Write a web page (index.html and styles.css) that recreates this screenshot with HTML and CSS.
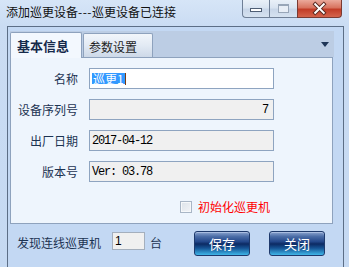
FILE: index.html
```html
<!DOCTYPE html>
<html>
<head>
<meta charset="utf-8">
<link rel="stylesheet" href="styles.css">
</head>
<body>
<div class="window">
  <div class="titlebar">
    <div class="title">添加巡更设备<span class="dash">---</span>巡更设备已连接</div>
    <div class="caption-btns">
      <div class="cbtn min"><span class="min-icon"></span></div>
      <div class="cbtn max"><span class="max-icon"></span></div>
      <div class="cbtn close">
        <svg width="45" height="18" viewBox="0 0 45 18">
          <path d="M18 4 L27 13 M27 4 L18 13" stroke="#5a2a22" stroke-width="4" stroke-linecap="square" fill="none"/>
          <path d="M18 4 L27 13 M27 4 L18 13" stroke="#ffffff" stroke-width="2" stroke-linecap="square" fill="none"/>
        </svg>
      </div>
    </div>
  </div>
  <div class="client">
    <div class="tabs">
      <div class="tabstrip">
        <div class="tab active">基本信息</div>
        <div class="tab inactive">参数设置</div>
        <div class="strip-fill"></div>
        <div class="arrow"></div>
      </div>
      <div class="panel">
        <div class="form">
          <div class="label">名称</div>
          <div class="field edit"><span class="sel">巡更1</span><span class="caret"></span></div>
          <div class="label">设备序列号</div>
          <div class="field ro right"><span class="mono">7</span></div>
          <div class="label">出厂日期</div>
          <div class="field ro"><span class="mono">2017-04-12</span></div>
          <div class="label">版本号</div>
          <div class="field ro"><span class="mono">Ver: 03.78</span></div>
        </div>
        <div class="check-row">
          <span class="checkbox"></span>
          <span class="check-label">初始化巡更机</span>
        </div>
      </div>
    </div>
    <div class="bottom">
      <span class="found">发现连线巡更机</span>
      <div class="count">1</div>
      <span class="unit">台</span>
      <div class="btn save">保存</div>
      <div class="btn close-btn">关闭</div>
    </div>
  </div>
</div>
</body>
</html>
```

FILE: styles.css
```css
* { box-sizing: border-box; }
html, body { margin: 0; padding: 0; }
body {
  width: 349px;
  height: 267px;
  overflow: hidden;
  font-family: "Noto Sans CJK SC", "Noto Sans", sans-serif;
  background: #c8dbf3;
}
.window {
  width: 349px;
  height: 267px;
  display: flex;
  flex-direction: column;
  background: linear-gradient(to bottom, #d6e5f7 0px, #cadcf3 26px, #c5d9f2 100%);
}
.titlebar {
  height: 26px;
  display: flex;
  align-items: flex-start;
  justify-content: space-between;
  padding-right: 7px;
}
.title {
  font-size: 12px;
  line-height: 14px;
  color: #101010;
  padding: 5px 0 0 6px;
  white-space: nowrap;
}
.dash { letter-spacing: 0.5px; }
.caption-btns {
  display: flex;
  height: 18px;
}
.cbtn {
  height: 18px;
  display: flex;
  align-items: center;
  justify-content: center;
  border: 1px solid #6f7f96;
  border-top: none;
}
.min {
  width: 27px;
  border-right: none;
  border-bottom-left-radius: 4px;
  background: linear-gradient(to bottom, #e9f0f8 0%, #d9e4f1 45%, #c8d6e8 55%, #d6e2f0 100%);
}
.max {
  width: 28px;
  border-right: none;
  background: linear-gradient(to bottom, #e9f0f8 0%, #d9e4f1 45%, #c8d6e8 55%, #d6e2f0 100%);
}
.close {
  width: 45px;
  border-color: #7a3a32;
  border-bottom-right-radius: 4px;
  background: linear-gradient(to bottom, #eba99b 0%, #d8735f 45%, #c23c27 55%, #d4644c 100%);
}
.min-icon {
  width: 12px;
  height: 4px;
  margin-top: 2px;
  background: #ffffff;
  border: 1px solid #4f5e74;
}
.max-icon {
  width: 11px;
  height: 9px;
  border: 1px solid #98a6b8;
  border-top-width: 2px;
  background: #e8eef6;
}
.client {
  flex: 1;
  margin: 0 5px 0 7px;
  border: 1px solid #5c6e86;
  border-bottom: none;
  background: #c3d8f3;
  padding: 4px 0 0 2px;
  display: flex;
  flex-direction: column;
}
.tabs {
  width: 324px;
  display: flex;
  flex-direction: column;
}
.tabstrip {
  height: 26px;
  display: flex;
  align-items: flex-end;
  background: #bccde4;
  position: relative;
  z-index: 1;
}
.tab {
  display: flex;
  align-items: center;
  border: 1px solid #8ea2bd;
  border-bottom: none;
  border-radius: 2px 2px 0 0;
  white-space: nowrap;
}
.tab.active {
  width: 72px;
  height: 26px;
  margin-bottom: -1px;
  background: #f3f8fe;
  padding-left: 6px;
  font-size: 13px;
  font-weight: bold;
  color: #162a4b;
}
.tab.inactive {
  width: 70px;
  height: 24px;
  margin-left: 1px;
  padding-left: 5px;
  padding-top: 1px;
  background: linear-gradient(to bottom, #f2f6fb 0%, #e2eaf4 50%, #cdd9e8 100%);
  font-size: 12px;
  color: #1e1e1e;
}
.strip-fill { flex: 1; }
.arrow {
  width: 0;
  height: 0;
  border-left: 4.5px solid transparent;
  border-right: 4.5px solid transparent;
  border-top: 5px solid #1f3657;
  align-self: flex-start;
  margin: 11px 5px 0 0;
}
.panel {
  width: 323px;
  height: 167px;
  border: 1px solid #8ea2bd;
  background: #eef5fd;
  display: flex;
  flex-direction: column;
}
.form {
  display: grid;
  grid-template-columns: 68px 185px;
  grid-auto-rows: 21px;
  column-gap: 10px;
  row-gap: 10px;
  padding-top: 10px;
}
.label {
  font-size: 12px;
  line-height: 21px;
  color: #1c3352;
  text-align: right;
  padding-right: 1px;
  white-space: nowrap;
}
.field {
  border: 1px solid #8ea4c0;
  display: flex;
  align-items: center;
  padding: 0 5px 0 2px;
}
.field.edit { background: #ffffff; }
.field.ro { background: #f0f0f0; }
.field.right { justify-content: flex-end; }
.sel {
  background: #3399ff;
  color: #ffffff;
  font-size: 12px;
  line-height: 11px;
  height: 11px;
  padding: 0 1px;
  overflow: visible;
}
.caret {
  width: 1px;
  height: 12px;
  background: #7a3a10;
}
.mono {
  font-family: "Liberation Mono", "DejaVu Sans Mono", monospace;
  font-size: 12px;
  letter-spacing: -1.2px;
  color: #000000;
  line-height: 14px;
}
.check-row {
  margin-top: 18px;
  height: 14px;
  display: flex;
  align-items: center;
  gap: 6px;
  padding-left: 169px;
}
.checkbox {
  width: 12px;
  height: 12px;
  border: 1px solid #a9b6c6;
  background: linear-gradient(135deg, #dde3ea 0%, #f2f4f7 100%);
  box-shadow: inset 0 0 0 1px #f6f8fa;
}
.check-label {
  font-size: 12px;
  line-height: 14px;
  color: #ff0000;
}
.bottom {
  display: flex;
  align-items: flex-start;
  padding: 7px 0 0 7px;
}
.found {
  font-size: 12px;
  line-height: 14px;
  color: #1c3352;
  margin-top: 5px;
}
.count {
  width: 33px;
  height: 18px;
  margin: 1px 0 0 11px;
  border: 1px solid #a4afbd;
  background: #f0f0f0;
  font-family: "Liberation Sans", sans-serif;
  font-size: 12px;
  line-height: 16px;
  padding-left: 2px;
  color: #000;
}
.unit {
  font-size: 12px;
  line-height: 14px;
  color: #1c3352;
  margin: 5px 0 0 5px;
}
.btn {
  width: 56px;
  height: 25px;
  border: 1px solid #1e3a6c;
  border-radius: 3px;
  display: flex;
  align-items: center;
  justify-content: center;
  color: #ffffff;
  font-size: 13px;
  background: linear-gradient(to bottom, #8ba4cf 0%, #4a6ca6 20%, #23478a 42%, #0c2a63 52%, #155394 70%, #3fb6e8 100%);
  box-shadow: inset 0 1px 0 #a9bde0;
}
.save { margin-left: 32px; }
.close-btn { margin-left: 19px; }
```
